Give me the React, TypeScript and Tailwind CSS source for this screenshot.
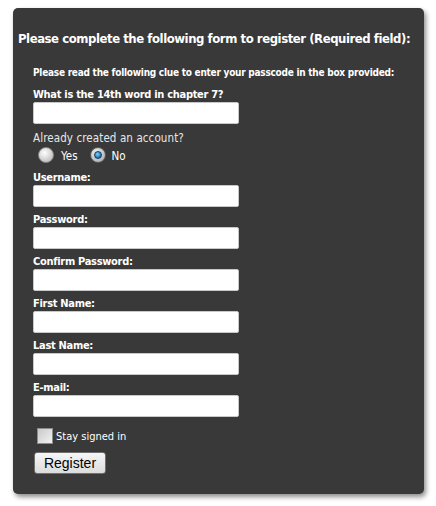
import React from "react";

const font = { fontFamily: '"DejaVu Sans Condensed", "DejaVu Sans", sans-serif' };

function Field({ label }: { label: string }) {
  return (
    <div className="mt-[6px] flex flex-col">
      <label className="block text-[11px] font-bold leading-[14px] tracking-[-0.3px] text-white">{label}</label>
      <input
        type="text"
        className="h-[22px] w-[206px] rounded-[2px] border border-[#c8c8c8] bg-white outline-none"
      />
    </div>
  );
}

function Radio({ checked }: { checked?: boolean }) {
  if (checked) {
    return (
      <span className="flex h-[16px] w-[16px] items-center justify-center rounded-full border border-[#5a5a5a] bg-[radial-gradient(circle_at_40%_35%,#f4f4f4,#9a9a9a)]">
        <span className="h-[8px] w-[8px] rounded-full border border-[#0b3d63] bg-[radial-gradient(circle_at_40%_35%,#7fd0ff,#1a6fb0_70%)]" />
      </span>
    );
  }
  return (
    <span className="block h-[16px] w-[16px] rounded-full border border-[#8a8a8a] bg-[radial-gradient(circle_at_40%_35%,#ffffff,#bdbdbd_80%)]" />
  );
}

export default function App() {
  return (
    <div className="min-h-screen bg-white pt-[8px] pl-[13px]" style={font}>
      <div className="w-[411px] rounded-[5px] bg-[#393939] pt-[22px] pb-[19px] shadow-[2px_3px_5px_rgba(0,0,0,0.45)]">
        <h2 className="whitespace-nowrap pl-[5px] text-[13px] font-bold leading-[17px] tracking-[-0.45px] text-white">
          Please complete the following form to register (Required field):
        </h2>

        <div className="mt-[19px] pl-[20px]">
          <p className="text-[10px] font-bold leading-[13px] tracking-[-0.25px] text-white">
            Please read the following clue to enter your passcode in the box provided:
          </p>

          <div className="mt-[9px] flex flex-col">
            <label className="block text-[11px] font-bold leading-[14px] tracking-[-0.3px] text-white">
              What is the 14th word in chapter 7?
            </label>
            <input
              type="text"
              className="h-[22px] w-[206px] rounded-[2px] border border-[#c8c8c8] bg-white outline-none"
            />
          </div>

          <p className="mt-[7px] text-[11.5px] leading-[14px] tracking-[0.1px] text-[#e8e8e8]">Already created an account?</p>
          <div className="flex items-center pl-[5px] text-[11.5px] text-white">
            <Radio />
            <span className="ml-[7px] mt-[3px]">Yes</span>
            <span className="ml-[12px]">
              <Radio checked />
            </span>
            <span className="ml-[6px] mt-[3px]">No</span>
          </div>

          <div className="mt-[5px]">
            <Field label="Username:" />
            <Field label="Password:" />
            <Field label="Confirm Password:" />
            <Field label="First Name:" />
            <Field label="Last Name:" />
            <Field label="E-mail:" />
          </div>

          <div className="mt-[11px] flex items-end pl-[4px]">
            <span className="block h-[16px] w-[16px] border border-[#8c8c8c] bg-[linear-gradient(135deg,#c9c9c9,#f2f2f2)]" />
            <span className="ml-[3px] text-[11px] leading-[14px] text-white">Stay signed in</span>
          </div>

          <button
            type="button"
            className="mt-[8px] ml-[1px] h-[22px] w-[72px] rounded-[3px] border border-[#707070] bg-[linear-gradient(#f6f6f6,#dcdcdc)] text-[14px] leading-[18px] text-black"
            style={{ fontFamily: '"Liberation Sans", Arial, sans-serif' }}
          >
            Register
          </button>
        </div>
      </div>
    </div>
  );
}
